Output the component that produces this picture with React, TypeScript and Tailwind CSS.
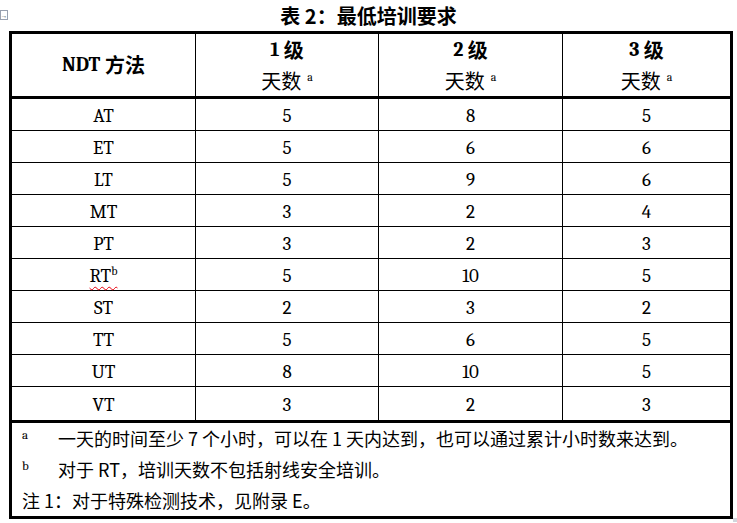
const rows: [string, string, string, string][] = [
  ["AT", "5", "8", "5"],
  ["ET", "5", "6", "6"],
  ["LT", "5", "9", "6"],
  ["MT", "3", "2", "4"],
  ["PT", "3", "2", "3"],
  ["RT", "5", "10", "5"],
  ["ST", "2", "3", "2"],
  ["TT", "5", "6", "5"],
  ["UT", "8", "10", "5"],
  ["VT", "3", "2", "3"],
];

const serif = "font-['Cambria','Liberation_Serif','Noto_Sans_CJK_SC',serif]";
const cjk = "font-['Noto_Sans_CJK_SC','Liberation_Sans',sans-serif]";
const cols = "grid grid-cols-[183px_183px_184px_168px]";

function LevelHead({ n }: { n: string }) {
  return (
    <div className="flex flex-col items-center justify-center border-l border-black">
      <div className={`h-[31px] flex items-center text-[20px] font-bold ${cjk}`}>
        <span className={serif}>{n}</span>&nbsp;级
      </div>
      <div className={`h-[31px] flex items-center text-[20px] ${cjk}`}>
        天数<span className={`ml-[6px] text-[12px] -mt-2 ${serif}`}>a</span>
      </div>
    </div>
  );
}

export default function App() {
  return (
    <div className="w-[737px] h-[523px] bg-white relative text-black">
      <div className="absolute left-0 top-[10px] w-[8px] h-[10px] border border-gray-400 bg-white flex items-center justify-center text-[7px] leading-none text-gray-600">
        →
      </div>
      <div className={`h-[31px] flex items-center justify-center text-[20px] font-bold ${cjk}`}>
        表 2：最低培训要求
      </div>
      <div className="ml-[9px] w-[724px] border-[3px] border-black">
        <div className={`${cols} h-[62px] border-b-[3px] border-black box-content`}>
          <div className={`flex items-center justify-center text-[20px] font-bold ${cjk}`}>
            <span className={serif}>NDT</span>&nbsp;方法
          </div>
          <LevelHead n="1" />
          <LevelHead n="2" />
          <LevelHead n="3" />
        </div>
        {rows.map((r, i) => (
          <div
            key={r[0]}
            className={`${cols} ${i < 9 ? "h-[32px] border-b border-black" : "h-[33px] border-b-[3px] border-black box-content"} text-[19px] ${serif}`}
          >
            {r.map((c, j) => (
              <div
                key={j}
                className={`flex items-center justify-center pt-[3px] ${j > 0 ? "border-l border-black" : ""}`}
              >
                {j === 0 && c === "RT" ? (
                  <span className="underline decoration-wavy decoration-red-600 decoration-1 underline-offset-4">
                    RT<span className="text-[12px] align-top">b</span>
                  </span>
                ) : (
                  c
                )}
              </div>
            ))}
          </div>
        ))}
        <div className={`h-[93px] pl-[10px] text-[18px] ${cjk}`}>
          <div className="h-[31px] flex items-center">
            <span className={`w-[36px] text-[13px] -mt-2 ${serif}`}>a</span>
            <span>一天的时间至少 7 个小时，可以在 1 天内达到，也可以通过累计小时数来达到。</span>
          </div>
          <div className="h-[31px] flex items-center">
            <span className={`w-[36px] text-[13px] -mt-2 ${serif}`}>b</span>
            <span>对于 RT，培训天数不包括射线安全培训。</span>
          </div>
          <div className="h-[31px] flex items-center">
            <span>注 1：对于特殊检测技术，见附录 E。</span>
          </div>
        </div>
      </div>
      <div className="absolute left-[733px] top-[518px] w-[4px] h-[4px] bg-gray-300" />
    </div>
  );
}
